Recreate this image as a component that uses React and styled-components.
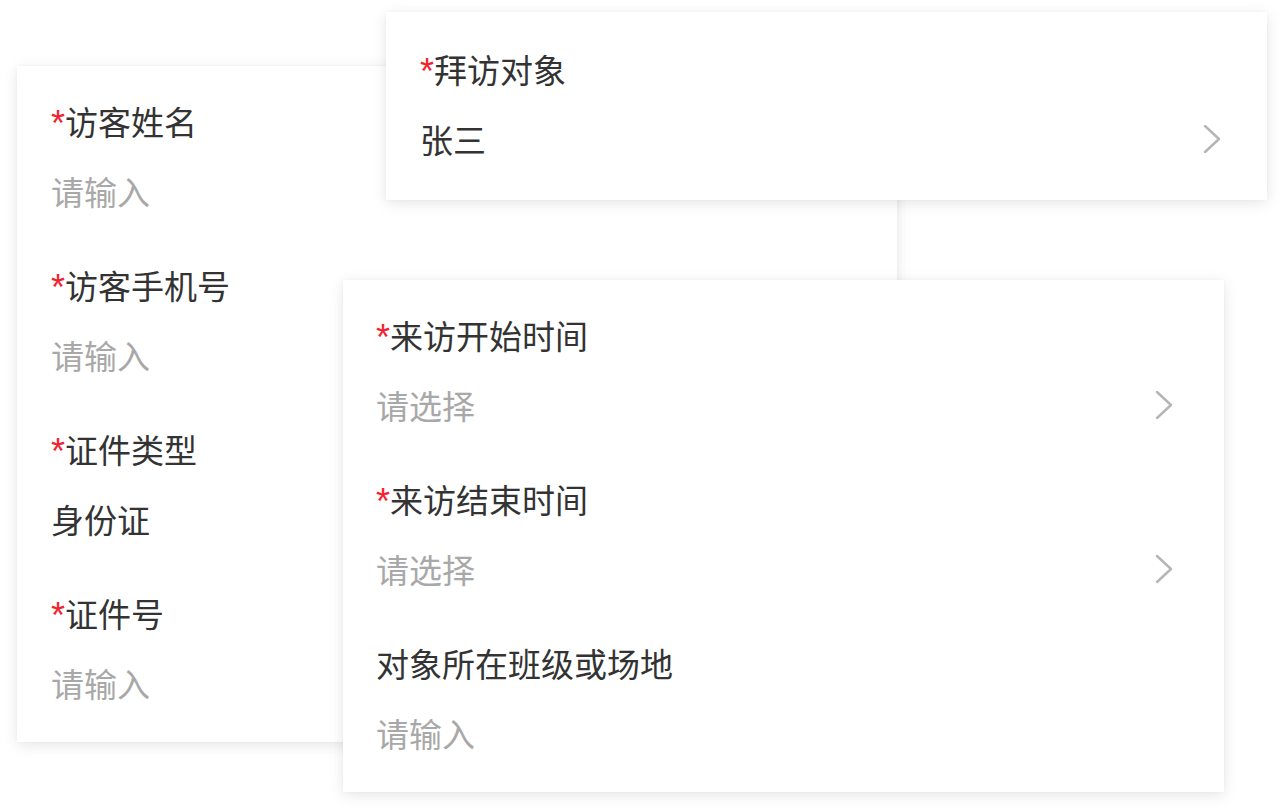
import React from "react";
import styled, { createGlobalStyle } from "styled-components";

const Global = createGlobalStyle`
  html, body { margin: 0; padding: 0; background: #ffffff; }
  body { font-family: "Noto Sans CJK SC", "Noto Sans", sans-serif; }
  * { box-sizing: border-box; }
`;

const Canvas = styled.div`
  position: relative;
  width: 1284px;
  height: 812px;
  background: #ffffff;
  overflow: hidden;
`;

const Card = styled.div`
  position: absolute;
  left: ${(p) => p.$x}px;
  top: ${(p) => p.$y}px;
  width: ${(p) => p.$w}px;
  height: ${(p) => p.$h}px;
  background: #ffffff;
  box-shadow: 0 3px 14px rgba(0, 0, 0, 0.1), 0 0 4px rgba(0, 0, 0, 0.03);
  padding: ${(p) => p.$pt}px ${(p) => p.$pr}px 0 ${(p) => p.$pl}px;
  display: flex;
  flex-direction: column;
  gap: 54px;
`;

const Field = styled.div`
  display: flex;
  flex-direction: column;
  gap: 30px;
`;

const Label = styled.div`
  font-size: 33px;
  line-height: 40px;
  height: 40px;
  color: #333333;
  white-space: nowrap;
  display: flex;
  align-items: center;
`;

const Star = styled.span`
  color: #f5222d;
  font-family: "Liberation Sans", sans-serif;
  font-size: 36px;
  line-height: 40px;
  margin-right: 0;
  position: relative;
  top: 3px;
`;

const ValueRow = styled.div`
  display: flex;
  align-items: center;
  justify-content: space-between;
  height: 40px;
`;

const Value = styled.div`
  font-size: 33px;
  line-height: 40px;
  color: ${(p) => (p.$placeholder ? "#a8a8a8" : "#333333")};
  white-space: nowrap;
`;

const Chevron = styled.svg`
  width: 18px;
  height: 30px;
  flex: none;
`;

const Arrow = () => (
  <Chevron viewBox="0 0 18 30">
    <path
      d="M2 2 L16 15 L2 28"
      fill="none"
      stroke="#b5b5b5"
      strokeWidth="2.4"
      strokeLinecap="round"
      strokeLinejoin="round"
    />
  </Chevron>
);

const FormField = ({ label, required, value, placeholder, arrow }) => (
  <Field>
    <Label>
      {required && <Star>*</Star>}
      {label}
    </Label>
    <ValueRow>
      <Value $placeholder={placeholder}>{value}</Value>
      {arrow && <Arrow />}
    </ValueRow>
  </Field>
);

export default function App() {
  return (
    <Canvas>
      <Global />
      <Card $x={17} $y={66} $w={880} $h={676} $pt={35} $pr={40} $pl={34}>
        <FormField label="访客姓名" required value="请输入" placeholder />
        <FormField label="访客手机号" required value="请输入" placeholder />
        <FormField label="证件类型" required value="身份证" />
        <FormField label="证件号" required value="请输入" placeholder />
      </Card>
      <Card $x={386} $y={12} $w={881} $h={188} $pt={37} $pr={46} $pl={34}>
        <FormField label="拜访对象" required value="张三" arrow />
      </Card>
      <Card $x={343} $y={280} $w={881} $h={512} $pt={35} $pr={51} $pl={33}>
        <FormField label="来访开始时间" required value="请选择" placeholder arrow />
        <FormField label="来访结束时间" required value="请选择" placeholder arrow />
        <FormField label="对象所在班级或场地" value="请输入" placeholder />
      </Card>
    </Canvas>
  );
}
